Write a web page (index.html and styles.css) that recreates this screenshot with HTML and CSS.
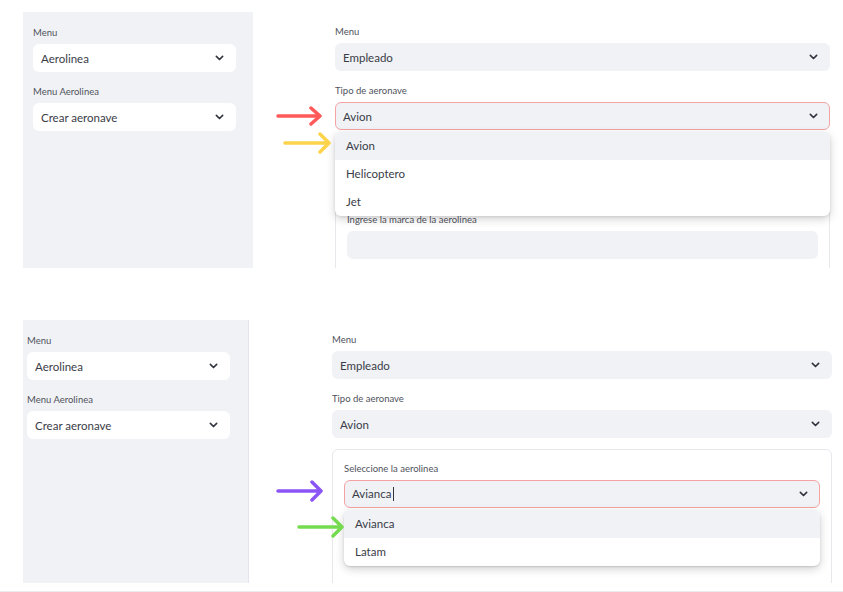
FILE: index.html
```html
<!DOCTYPE html>
<html lang="es">
<head>
<meta charset="utf-8">
<title>Aerolinea</title>
<link rel="stylesheet" href="styles.css">
</head>
<body>
<section class="shot shot-top">
  <aside class="sidebar sb-top">
    <div class="field">
      <div class="label">Menu</div>
      <div class="select white"><span>Aerolinea</span><svg class="chev" viewBox="0 0 10 6"><path d="M1.5 1.2l3.5 3.5 3.5-3.5"/></svg></div>
    </div>
    <div class="field">
      <div class="label">Menu Aerolinea</div>
      <div class="select white"><span>Crear aeronave</span><svg class="chev" viewBox="0 0 10 6"><path d="M1.5 1.2l3.5 3.5 3.5-3.5"/></svg></div>
    </div>
  </aside>
  <main class="main main-top">
    <div class="field">
      <div class="label">Menu</div>
      <div class="select"><span>Empleado</span><svg class="chev" viewBox="0 0 10 6"><path d="M1.5 1.2l3.5 3.5 3.5-3.5"/></svg></div>
    </div>
    <div class="field">
      <div class="label">Tipo de aeronave</div>
      <div class="select-wrap">
        <div class="select focus"><span>Avion</span><svg class="chev" viewBox="0 0 10 6"><path d="M1.5 1.2l3.5 3.5 3.5-3.5"/></svg></div>
        <ul class="dropdown">
          <li class="active">Avion</li>
          <li>Helicoptero</li>
          <li>Jet</li>
        </ul>
      </div>
    </div>
    <div class="box">
      <div class="field">
        <div class="label"></div>
        <div class="select"></div>
      </div>
      <div class="field">
        <div class="label">Ingrese la marca de la aerolinea</div>
        <div class="select"></div>
      </div>
    </div>
  </main>
</section>

<section class="shot shot-bottom">
  <aside class="sidebar sb-bottom">
    <div class="field">
      <div class="label">Menu</div>
      <div class="select white"><span>Aerolinea</span><svg class="chev" viewBox="0 0 10 6"><path d="M1.5 1.2l3.5 3.5 3.5-3.5"/></svg></div>
    </div>
    <div class="field">
      <div class="label">Menu Aerolinea</div>
      <div class="select white"><span>Crear aeronave</span><svg class="chev" viewBox="0 0 10 6"><path d="M1.5 1.2l3.5 3.5 3.5-3.5"/></svg></div>
    </div>
  </aside>
  <main class="main main-bottom">
    <div class="field">
      <div class="label">Menu</div>
      <div class="select"><span>Empleado</span><svg class="chev" viewBox="0 0 10 6"><path d="M1.5 1.2l3.5 3.5 3.5-3.5"/></svg></div>
    </div>
    <div class="field">
      <div class="label">Tipo de aeronave</div>
      <div class="select"><span>Avion</span><svg class="chev" viewBox="0 0 10 6"><path d="M1.5 1.2l3.5 3.5 3.5-3.5"/></svg></div>
    </div>
    <div class="box">
      <div class="field">
        <div class="label">Seleccione la aerolinea</div>
        <div class="select-wrap">
          <div class="select focus"><span>Avianca<i class="caret"></i></span><svg class="chev" viewBox="0 0 10 6"><path d="M1.5 1.2l3.5 3.5 3.5-3.5"/></svg></div>
          <ul class="dropdown">
            <li class="active">Avianca</li>
            <li>Latam</li>
          </ul>
        </div>
      </div>
      <div class="field">
        <div class="label"></div>
        <div class="select"></div>
      </div>
    </div>
  </main>
</section>
<div class="bottom-rule"></div>

<svg class="arrow arrow-red" viewBox="0 0 48 20"><path d="M2 10H44M35 2l9 8-9 8"/></svg>
<svg class="arrow arrow-yellow" viewBox="0 0 50 22"><path d="M2 11H46M37 2l9 9-9 9"/></svg>
<svg class="arrow arrow-purple" viewBox="0 0 50 22"><path d="M2 11H45M36 2l9 9-9 9"/></svg>
<svg class="arrow arrow-green" viewBox="0 0 50 22"><path d="M2 11H45M36 2l9 9-9 9"/></svg>
</body>
</html>
```

FILE: styles.css
```css
* {
  box-sizing: border-box;
  margin: 0;
  padding: 0;
}

html, body {
  width: 843px;
  height: 592px;
}

body {
  position: relative;
  overflow: hidden;
  background: #ffffff;
  font-family: Lato, "Noto Sans", sans-serif;
  color: #31333f;
}

.shot {
  display: flex;
  align-items: flex-start;
  overflow: hidden;
}

.shot-top {
  height: 268px;
  padding: 12px 0 0 23px;
}

.shot-bottom {
  height: 263px;
  margin-top: 52px;
  padding-left: 23px;
}

.bottom-rule {
  margin-top: 8px;
  border-top: 1px solid #e9eaee;
}

.sidebar {
  background: #f0f2f6;
  flex: none;
}

.sb-top {
  width: 230px;
  height: 256px;
  padding: 14px 17px 0 10px;
}

.sb-bottom {
  width: 226px;
  height: 263px;
  padding: 14px 18px 0 4px;
  border-right: 1px solid #e3e5ea;
}

.main {
  flex: none;
}

.main-top {
  width: 495px;
  margin-left: 82px;
  padding-top: 13px;
}

.main-bottom {
  width: 500px;
  margin-left: 83px;
  padding-top: 13px;
}

.field + .field {
  margin-top: 13px;
}

.label {
  height: 14px;
  line-height: 14px;
  margin-bottom: 4px;
  font-size: 9.5px;
  color: #50525c;
}

.main-top .field + .field .label {
  margin-top: 1px;
}

.select-wrap {
  position: relative;
}

.select {
  height: 28px;
  display: flex;
  align-items: center;
  justify-content: space-between;
  padding: 0 11px 0 7px;
  border: 1px solid transparent;
  border-radius: 6px;
  background: #f0f2f6;
  font-size: 11.5px;
  color: #3a3c47;
}

.select.white {
  background: #ffffff;
}

.select.focus {
  border-color: #f4a2a2;
}

.chev {
  width: 9px;
  height: 6px;
  fill: none;
  stroke: #31333f;
  stroke-width: 1.8;
  stroke-linecap: round;
  stroke-linejoin: round;
}

.caret {
  display: inline-block;
  width: 1px;
  height: 14px;
  margin-left: 2px;
  vertical-align: -3px;
  background: #31333f;
}

.dropdown {
  position: absolute;
  top: calc(100% + 2px);
  left: 0;
  right: 0;
  z-index: 5;
  list-style: none;
  background: #ffffff;
  border-radius: 6px;
  overflow: hidden;
  box-shadow: 0 3px 10px rgba(0, 0, 0, 0.18), 0 1px 3px rgba(0, 0, 0, 0.08);
}

.dropdown li {
  height: 28px;
  line-height: 28px;
  padding-left: 11px;
  font-size: 11.5px;
  color: #3a3c47;
}

.dropdown li.active {
  background: #f0f2f6;
}

.box {
  margin-top: 11px;
  padding: 12px 11px 20px 11px;
  border: 1px solid #e6e8ec;
  border-radius: 6px;
}

.arrow {
  position: absolute;
  fill: none;
  stroke-width: 3.5;
  stroke-linecap: round;
  stroke-linejoin: round;
  z-index: 10;
}

.arrow-red {
  left: 276px;
  top: 106px;
  width: 48px;
  height: 20px;
  stroke: #ff5a5a;
}

.arrow-yellow {
  left: 283px;
  top: 132px;
  width: 50px;
  height: 22px;
  stroke: #fcd34a;
}

.arrow-purple {
  left: 276px;
  top: 480px;
  width: 50px;
  height: 22px;
  stroke: #8b55f6;
}

.arrow-green {
  left: 297px;
  top: 516px;
  width: 50px;
  height: 22px;
  stroke: #76db50;
}
```
